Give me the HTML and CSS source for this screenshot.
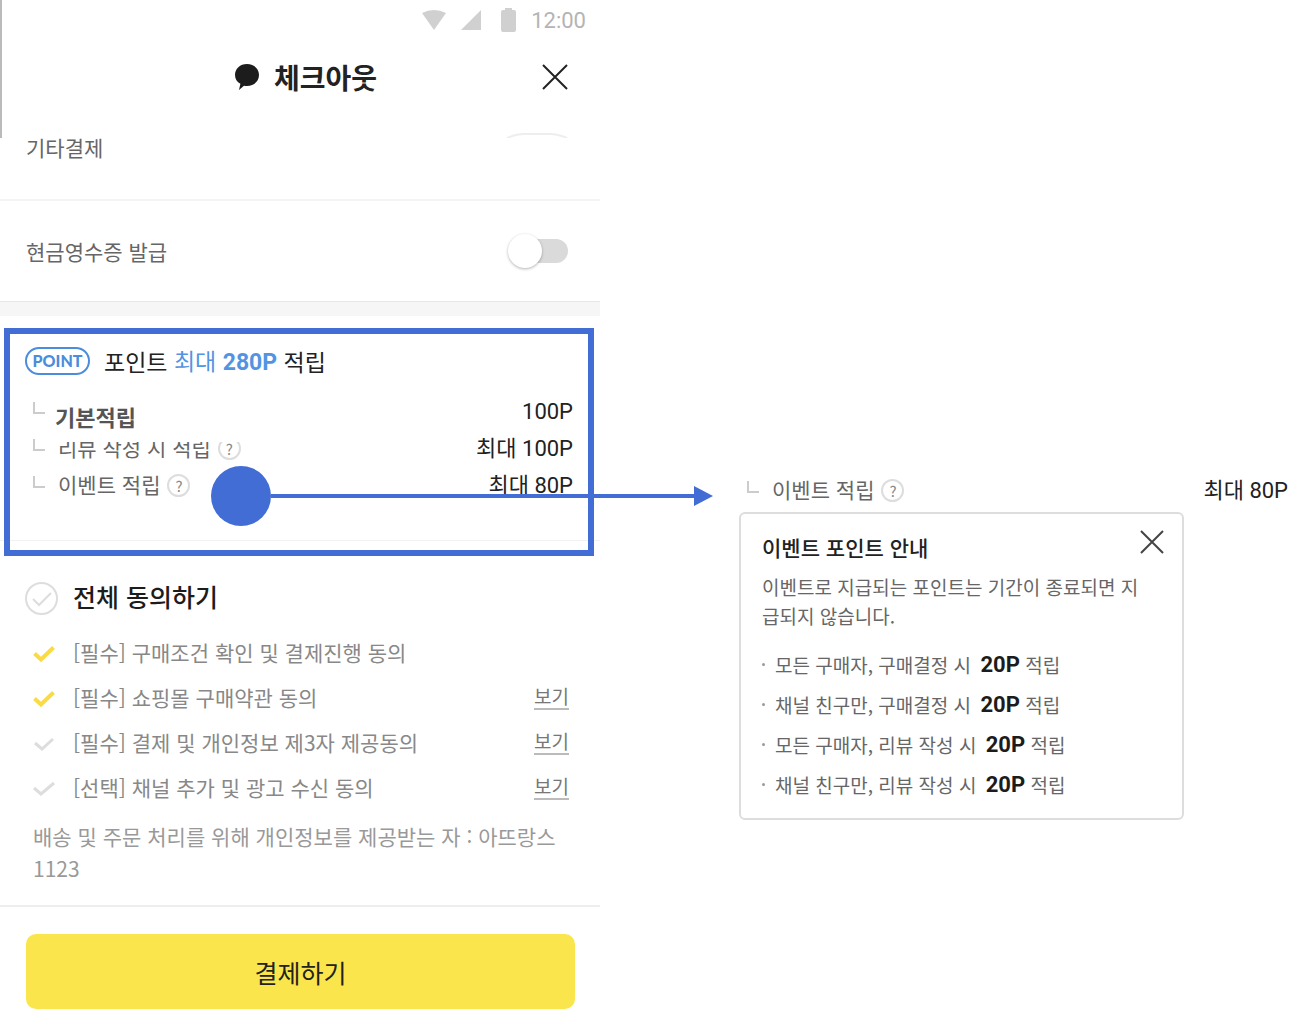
FILE: index.html
```html
<!DOCTYPE html>
<html lang="ko">
<head>
  <meta charset="UTF-8">
  <meta name="viewport" content="width=device-width, initial-scale=1.0">
  <title>체크아웃</title>
  <link rel="stylesheet" href="styles.css">
</head>
<body>
  <div class="layout">
    <main class="phone">
      <header class="header">
        <div class="status">
          <svg width="24" height="20" viewBox="0 0 24 20"><path d="M0 3Q12-3 24 3L12 20z"/></svg>
          <svg width="20" height="20" viewBox="0 0 20 20"><path d="M20 0v20H0z"/></svg>
          <svg width="15" height="24" viewBox="0 0 15 24"><path d="M2 2h2V0h7v2h2q2 0 2 2v18q0 2-2 2H2q-2 0-2-2V4q0-2 2-2z"/></svg>
          <span>12:00</span>
        </div>
        <div class="title-bar">
          <h1>
            <svg width="24" height="26" viewBox="0 0 24 26"><path d="M12 0c7 0 12 4.800 12 11s-5 11-12 11c-1 0-2 0-3-.3L4 26l1.400-6.300C2 18 0 15 0 11 0 4.800 5 0 12 0z"/></svg>
            체크아웃
          </h1>
          <button type="button" class="close" aria-label="닫기">
            <svg width="26" height="26" viewBox="0 0 26 26"><path d="M1 1l24 24M25 1L1 25"/></svg>
          </button>
        </div>
        <svg class="toggle-edge" width="62" height="6" viewBox="0 0 62 6"><path d="M1 6Q10 2 18 2h26q8 0 17 4"/></svg>
      </header>

      <div class="row row-etc">기타결제</div>
      <div class="row row-receipt">
        <label for="receipt">현금영수증 발급</label>
        <input type="checkbox" id="receipt" class="toggle" role="switch">
      </div>

      <!-- Points -->
      <section class="points">
        <h2><span class="badge">POINT</span>포인트 <span class="max">최대 <b>280P</b></span> 적립</h2>
        <ul>
          <li>
            <i class="branch"></i>
            <span class="name basic">기본적립</span>
            <span class="value">100P</span>
          </li>
          <li>
            <i class="branch"></i>
            <span class="name">리뷰 작성 시 적립</span>
            <button type="button" class="help">?</button>
            <span class="value">최대 100P</span>
          </li>
          <li>
            <i class="branch"></i>
            <span class="name">이벤트 적립</span>
            <button type="button" class="help">?</button>
            <span class="value">최대 80P</span>
          </li>
        </ul>
        <div class="highlight"></div>
        <div class="pointer">
          <span class="dot"></span>
          <span class="line"></span>
          <span class="arrow"></span>
        </div>
      </section>

      <!-- Terms -->
      <section class="terms">
        <label class="agree-all">
          <input type="checkbox">
          <svg width="33" height="33" viewBox="0 0 33 33"><circle cx="16.500" cy="16.500" r="15.500"/><path d="M8 17l6 6L26 11"/></svg>
          전체 동의하기
        </label>
        <ul>
          <li>
            <label>
              <input type="checkbox" checked>
              <svg width="22" height="16" viewBox="0 0 22 16"><path d="M1.500 7.500L8 13.500 20.500 1.500"/></svg>
              [필수] 구매조건 확인 및 결제진행 동의
            </label>
          </li>
          <li>
            <label>
              <input type="checkbox" checked>
              <svg width="22" height="16" viewBox="0 0 22 16"><path d="M1.500 7.500L8 13.500 20.500 1.500"/></svg>
              [필수] 쇼핑몰 구매약관 동의
            </label>
            <a href="#">보기</a>
          </li>
          <li>
            <label>
              <input type="checkbox">
              <svg width="22" height="16" viewBox="0 0 22 16"><path d="M2 7l7 6L20 3"/></svg>
              [필수] 결제 및 개인정보 제3자 제공동의
            </label>
            <a href="#">보기</a>
          </li>
          <li>
            <label>
              <input type="checkbox">
              <svg width="22" height="16" viewBox="0 0 22 16"><path d="M1 7l7 6L21 2"/></svg>
              [선택] 채널 추가 및 광고 수신 동의
            </label>
            <a href="#">보기</a>
          </li>
        </ul>
        <p>배송 및 주문 처리를 위해 개인정보를 제공받는 자 : 아뜨랑스 1123</p>
      </section>

      <footer class="footer">
        <button type="submit" class="pay">결제하기</button>
      </footer>
    </main>

    <!-- Event point detail -->
    <aside class="detail">
      <div class="detail-row">
        <i class="branch"></i>
        <span class="name">이벤트 적립</span>
        <button type="button" class="help">?</button>
        <span class="value">최대 80P</span>
      </div>
      <div class="popup">
        <div class="popup-head">
          <h3>이벤트 포인트 안내</h3>
          <button type="button" class="close" aria-label="닫기">
            <svg width="24" height="24" viewBox="0 0 24 24"><path d="M1 1l22 22M23 1L1 23"/></svg>
          </button>
        </div>
        <p>이벤트로 지급되는 포인트는 기간이 종료되면 지급되지 않습니다.</p>
        <ul>
          <li>모든 구매자, 구매결정 시 <b>20P</b> 적립</li>
          <li>채널 친구만, 구매결정 시 <b>20P</b> 적립</li>
          <li>모든 구매자, 리뷰 작성 시 <b>20P</b> 적립</li>
          <li>채널 친구만, 리뷰 작성 시 <b>20P</b> 적립</li>
        </ul>
      </div>
    </aside>
  </div>
</body>
</html>
```
FILE: styles.css
```css
* {
  box-sizing: border-box;
}
body {
  margin: 0;
  background: #fff;
  color: #666;
  font-family: "Noto Sans CJK KR", sans-serif;
  font-size: 21px;
}
h1, h2, h3, p, ul {
  margin: 0;
  padding: 0;
}
ul {
  list-style: none;
}
button {
  padding: 0;
  border: none;
  background: none;
  font-family: inherit;
  cursor: pointer;
}
svg {
  display: block;
  flex: none;
}
.layout {
  display: grid;
  grid-template-columns: minmax(0, 600fr) minmax(0, 714fr);
}

/* header */
.header {
  display: flex;
  flex-direction: column;
  border-left: 2px solid #bbb;
}
.status {
  display: flex;
  align-items: center;
  justify-content: flex-end;
  height: 40px;
  padding-right: 14px;
  color: #b4b4b4;
  font-family: Roboto, sans-serif;
  font-size: 22px;
}
.status svg {
  fill: #d0d0d0;
  margin-right: 15px;
}
.status svg:nth-child(2) {
  margin-right: 20px;
}
.title-bar {
  display: grid;
  grid-template-columns: 1fr auto 1fr;
  align-items: center;
  height: 74px;
  padding: 0 32px;
}
.title-bar h1 {
  display: flex;
  grid-column: 2;
  align-items: center;
  gap: 15px;
  padding-left: 10px;
  color: #222;
  font-size: 28px;
  line-height: 40px;
}
.title-bar h1 svg {
  fill: #1c1c1c;
}
.title-bar .close {
  justify-self: end;
}
.close svg {
  fill: none;
  stroke: #222;
  stroke-width: 2;
}
.toggle-edge {
  align-self: flex-end;
  margin: 18px 32px 0 0;
  fill: none;
  stroke: #eee;
  stroke-width: 2;
}

/* payment rows */
.row {
  display: flex;
  align-items: center;
  justify-content: space-between;
  padding: 0 32px 0 26px;
}
.row-etc {
  height: 63px;
  padding-bottom: 44px;
  border-bottom: 2px solid #f4f4f4;
}
.row-receipt {
  height: 101px;
  border-bottom: 1px solid #e8e8e8;
}
.toggle {
  appearance: none;
  display: flex;
  align-items: center;
  width: 55px;
  height: 24px;
  margin: 0;
  border-radius: 12px;
  background: #dadada;
}
.toggle::before {
  content: "";
  flex: none;
  width: 34px;
  height: 34px;
  margin-left: -5px;
  border-radius: 50%;
  background: #fff;
  box-shadow: 0 1px 3px rgba(0, 0, 0, 0.3);
}

/* points */
.points {
  position: relative;
  padding: 26px 27px 36px 25px;
  border-top: 14px solid #f6f6f6;
  border-bottom: 1px solid #f2f2f2;
}
.points h2 {
  display: flex;
  align-items: center;
  height: 38px;
  color: #222;
  font-size: 23px;
  font-weight: 400;
  line-height: 36px;
  white-space: pre;
}
.points h2 b {
  font-family: Roboto, sans-serif;
}
.badge {
  width: 65px;
  height: 28px;
  margin-right: 14px;
  border: 2px solid #4a8ddc;
  border-radius: 14px;
  color: #4a8ddc;
  font-family: Lato, sans-serif;
  font-size: 16px;
  font-weight: 900;
  line-height: 24px;
  text-align: center;
}
.max {
  color: #5294e2;
}
.points ul {
  padding: 13px 0 0 8px;
}
.points li {
  display: flex;
  align-items: center;
  height: 37px;
}
.branch {
  flex: none;
  width: 12px;
  height: 12px;
  margin: 0 13px 8px 0;
  border: solid #ccc;
  border-width: 0 0 2px 2px;
}
.name {
  padding-bottom: 4px;
}
.value {
  margin-left: auto;
  color: #222;
  font-family: Roboto, "Noto Sans CJK KR", sans-serif;
  font-size: 22px;
  line-height: 32px;
}
.basic {
  position: relative;
  z-index: 1;
  align-self: flex-start;
  width: 200px;
  height: 40px;
  margin: 9px 0 0 -3px;
  background: #fff;
  color: #555;
  font-size: 22px;
  font-weight: 700;
  line-height: 28px;
}
.help {
  width: 23px;
  height: 23px;
  margin-left: 7px;
  border: 2px solid #ddd;
  border-radius: 50%;
  color: #888;
  font-size: 15px;
  line-height: 18px;
}
.highlight {
  position: absolute;
  inset: 12px 6px -16px 4px;
  border: 6px solid #426dd5;
}
.pointer {
  position: absolute;
  z-index: 2;
  top: 150px;
  right: -113px;
  left: 211px;
  display: flex;
  align-items: center;
}
.dot {
  width: 60px;
  height: 60px;
  border-radius: 50%;
  background: #426dd5;
}
.line {
  flex: 1;
  height: 4px;
  background: #426dd5;
}
.arrow {
  border: solid transparent;
  border-width: 10px 0 10px 19px;
  border-left-color: #426dd5;
}

/* terms */
.terms {
  padding: 33px 31px 21px 25px;
}
.terms label {
  display: flex;
  align-items: center;
}
.terms input {
  position: absolute;
  opacity: 0;
}
.terms svg {
  margin-top: 4px;
  fill: none;
  stroke: #ddd;
  stroke-width: 3;
}
.terms input:checked + svg {
  stroke: #fadb45;
  stroke-width: 4;
}
.terms .agree-all {
  gap: 15px;
  height: 44px;
  color: #1c1c1c;
  font-size: 25px;
  font-weight: 500;
}
.agree-all svg {
  stroke-width: 2;
}
.terms ul {
  padding: 11px 0 11px 8px;
}
.terms li {
  display: flex;
  align-items: center;
  justify-content: space-between;
  height: 45px;
  color: #888;
}
.terms li label {
  gap: 18px;
}
.terms a {
  border-bottom: 2px solid #bbb;
  color: #777;
  font-size: 19px;
  line-height: 24px;
  text-decoration: none;
}
.terms p {
  padding-left: 8px;
  color: #999;
  line-height: 32px;
}

/* footer */
.footer {
  padding: 27px 25px 27px 26px;
  border-top: 2px solid #eee;
}
.pay {
  width: 100%;
  height: 75px;
  border-radius: 10px;
  background: #fae64c;
  color: #222;
  font-size: 25px;
}

/* detail */
.detail {
  padding: 472px 26px 0 139px;
}
.detail-row {
  display: flex;
  align-items: center;
  height: 37px;
  margin-bottom: 3px;
  padding-left: 8px;
}
.popup {
  width: 81%;
  padding: 16px 18px 14px 21px;
  border: 2px solid #ddd;
  border-radius: 6px;
  font-size: 19px;
}
.popup-head {
  display: flex;
  justify-content: space-between;
}
.popup h3 {
  color: #222;
  font-size: 21px;
  font-weight: 500;
  line-height: 34px;
}
.popup .close {
  align-self: flex-start;
}
.popup .close svg {
  stroke: #444;
}
.popup p {
  margin: 8px 0 14px;
  padding-right: 16px;
  line-height: 29px;
}
.popup li {
  display: flex;
  align-items: center;
  height: 40px;
  white-space: pre;
}
.popup li::before {
  content: "";
  width: 3px;
  height: 3px;
  margin-right: 10px;
  border-radius: 50%;
  background: #999;
}
.popup b {
  margin-left: 4px;
  color: #1c1c1c;
  font-family: Roboto, sans-serif;
  font-size: 22px;
}
```
